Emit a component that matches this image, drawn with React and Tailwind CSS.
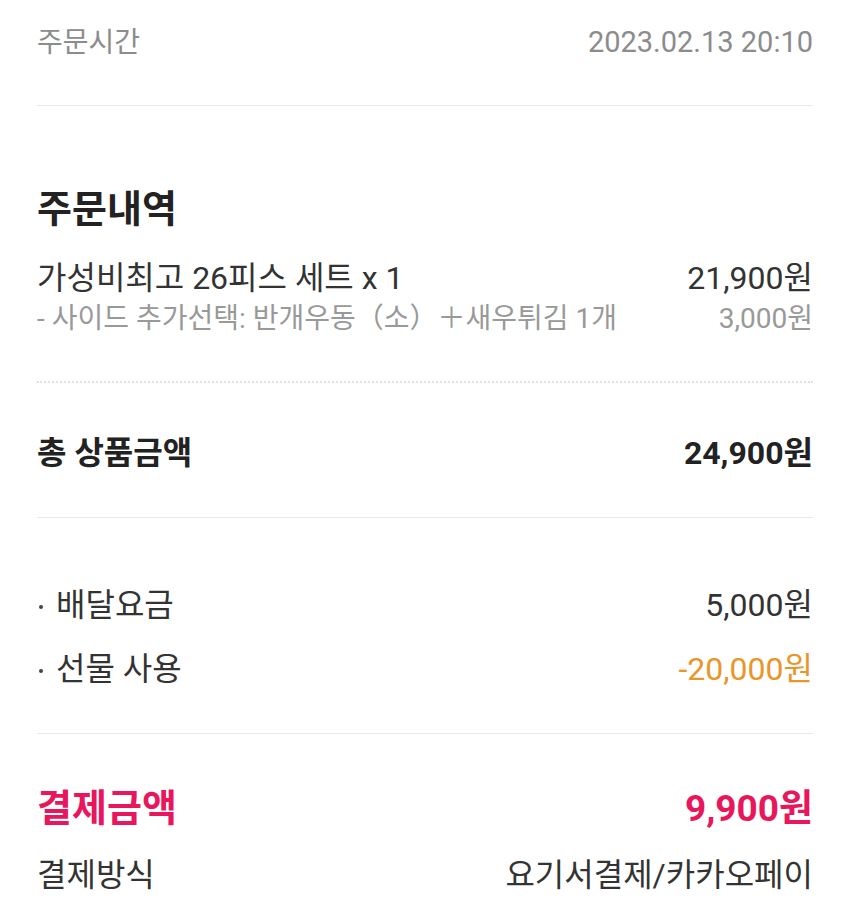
import React from "react";

const font = { fontFamily: 'Roboto, "Noto Sans CJK KR", "Noto Sans", sans-serif' };

function Row({ left, right, className = "" }) {
  return (
    <div className={`flex items-center justify-between ${className}`}>
      <span>{left}</span>
      <span>{right}</span>
    </div>
  );
}

function Bullet({ children }) {
  return (
    <span className="flex items-center">
      <span className="w-[4px] h-[4px] rounded-full bg-[#444] ml-[2px] mr-[13px] mt-[4px]" />
      {children}
    </span>
  );
}

export default function App() {
  return (
    <div
      className="w-[850px] h-[922px] bg-white px-[37px] overflow-hidden"
      style={font}
    >
      <div className="h-[85px] flex items-center justify-between text-[#8c8c8c]">
        <span className="text-[28px]">주문시간</span>
        <span className="text-[29px]">2023.02.13 20:10</span>
      </div>
      <div className="h-px bg-[#e9e9e9] mt-[20px]" />

      <div className="pt-[81px] text-[38px] font-bold text-[#222] leading-[44px]">
        주문내역
      </div>
      <Row
        className="mt-[27px] text-[32px] text-[#333] leading-[40px]"
        left="가성비최고 26피스 세트 x 1"
        right="21,900원"
      />
      <Row
        className="mt-[4px] text-[28px] text-[#999] leading-[34px]"
        left="- 사이드 추가선택: 반개우동（소）＋새우튀김 1개"
        right="3,000원"
      />
      <div className="mt-[45px] border-t-2 border-dotted border-[#e2e2e2]" />

      <Row
        className="mt-[50px] text-[32px] font-bold text-[#222] leading-[40px]"
        left="총 상품금액"
        right="24,900원"
      />
      <div className="h-px bg-[#e9e9e9] mt-[44px]" />

      <div className="mt-[67px] flex flex-col gap-[24px] text-[32px] text-[#333] leading-[40px]">
        <Row left={<Bullet>배달요금</Bullet>} right="5,000원" />
        <Row
          left={<Bullet>선물 사용</Bullet>}
          right={<span className="text-[#e8962a]">-20,000원</span>}
        />
      </div>
      <div className="h-px bg-[#e9e9e9] mt-[44px]" />

      <Row
        className="mt-[52px] text-[37px] font-bold text-[#e8175d] leading-[44px]"
        left={<span className="text-[38px]">결제금액</span>}
        right="9,900원"
      />
      <Row
        className="mt-[24px] text-[32px] text-[#333] leading-[40px]"
        left="결제방식"
        right="요기서결제/카카오페이"
      />
    </div>
  );
}
